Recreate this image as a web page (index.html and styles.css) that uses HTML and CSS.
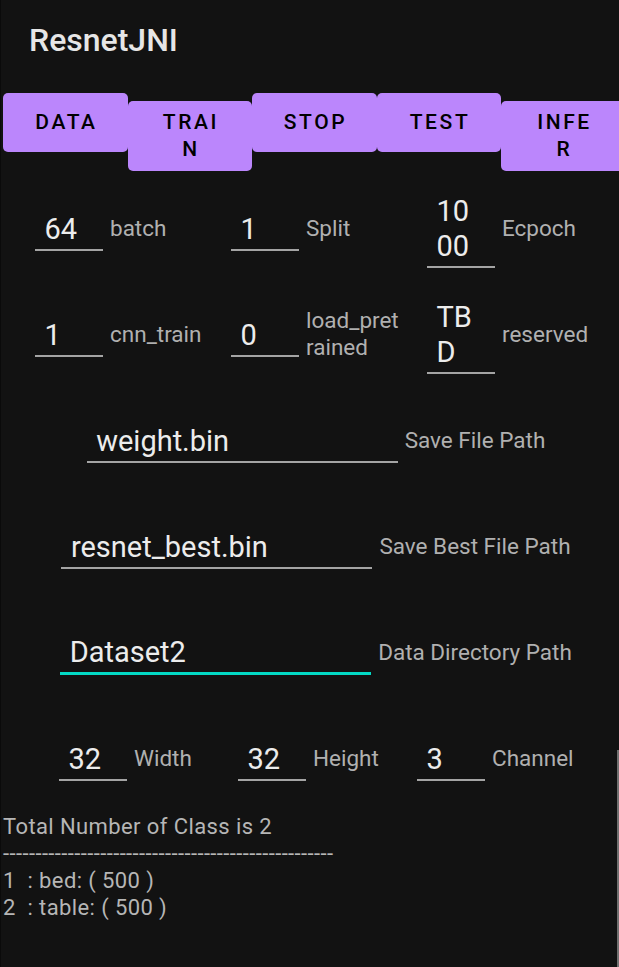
FILE: index.html
```html
<!DOCTYPE html>
<html lang="en">
<head>
<meta charset="utf-8">
<title>ResnetJNI</title>
<link rel="stylesheet" href="styles.css">
</head>
<body>
<div class="screen">
  <header class="appbar"><h1 class="title">ResnetJNI</h1></header>
  <div class="actions">
    <button class="btn">DATA</button>
    <button class="btn">TRAI<br>N</button>
    <button class="btn">STOP</button>
    <button class="btn">TEST</button>
    <button class="btn">INFE<br>R</button>
  </div>
  <main class="form">
    <div class="row grid3">
      <div class="field"><div class="edit small">64</div><span class="label">batch</span></div>
      <div class="field"><div class="edit small">1</div><span class="label">Split</span></div>
      <div class="field"><div class="edit small">10<br>00</div><span class="label">Ecpoch</span></div>
    </div>
    <div class="row grid3">
      <div class="field"><div class="edit small">1</div><span class="label">cnn_train</span></div>
      <div class="field"><div class="edit small">0</div><span class="label two">load_pret<br>rained</span></div>
      <div class="field"><div class="edit small">TB<br>D</div><span class="label">reserved</span></div>
    </div>
    <div class="row wide">
      <div class="edit long">weight.bin</div><span class="label">Save File Path</span>
    </div>
    <div class="row wide">
      <div class="edit long">resnet_best.bin</div><span class="label">Save Best File Path</span>
    </div>
    <div class="row wide">
      <div class="edit long focused">Dataset2</div><span class="label">Data Directory Path</span>
    </div>
    <div class="row grid3b">
      <div class="field"><div class="edit small">32</div><span class="label">Width</span></div>
      <div class="field"><div class="edit small">32</div><span class="label">Height</span></div>
      <div class="field"><div class="edit small">3</div><span class="label">Channel</span></div>
    </div>
  </main>
  <div class="log">
    <div class="log-line">Total Number of Class is 2</div>
    <div class="log-line">---------------------------------------------------</div>
    <div class="log-line">1  : bed: ( 500 )</div>
    <div class="log-line">2  : table: ( 500 )</div>
  </div>
  <div class="scrollbar"></div>
</div>
</body>
</html>
```
FILE: styles.css
```css
html, body {
  margin: 0;
  padding: 0;
  background: #121212;
}
body {
  width: 619px;
  height: 967px;
  overflow: hidden;
  font-family: Roboto, "Noto Sans", "Liberation Sans", sans-serif;
}
.screen {
  position: relative;
  width: 619px;
  height: 967px;
  overflow: hidden;
  border-left: 1px solid #0a0a0a;
  box-sizing: border-box;
}
.appbar {
  height: 93px;
  box-sizing: border-box;
  padding: 21px 0 0 28px;
}
.title {
  margin: 0;
  font-size: 32px;
  line-height: 38px;
  font-weight: 500;
  color: #e6e6e6;
}
.actions {
  display: flex;
  align-items: baseline;
  padding-left: 2px;
  width: 700px;
}
.btn {
  flex: none;
  width: 124.5px;
  min-height: 59px;
  box-sizing: border-box;
  padding: 8px 0 8px 2.5px;
  border: 0;
  border-radius: 5px;
  background: #bb86fc;
  color: #000;
  font-family: Roboto, "Noto Sans", sans-serif;
  font-size: 21px;
  line-height: 27px;
  font-weight: 500;
  letter-spacing: 2.6px;
  text-align: center;
  display: flex;
  align-items: center;
  justify-content: center;
}
.form {
  margin-top: 17px;
  display: flex;
  flex-direction: column;
  gap: 26px;
}
.row {
  height: 80px;
  align-items: center;
}
.grid3 {
  display: grid;
  grid-template-columns: repeat(3, 196px);
  padding-left: 34px;
}
.grid3b {
  display: grid;
  grid-template-columns: repeat(3, 179px);
  padding-left: 58px;
}
.field {
  display: flex;
  align-items: center;
  gap: 7px;
}
.wide {
  display: flex;
  justify-content: center;
  gap: 7px;
  padding-left: 12px;
}
.edit {
  box-sizing: border-box;
  padding: 6px 12px 2px 9.5px;
  font-size: 29px;
  line-height: 35px;
  color: #ececec;
  border-bottom: 2px solid #a4a4a4;
  word-break: break-all;
  flex: none;
}
.edit.small {
  width: 68px;
}
.edit.long {
  width: 311px;
}
.edit.focused {
  border-bottom: 3px solid #03dac5;
}
.label {
  font-size: 22.5px;
  line-height: 27px;
  color: #b0b0b0;
  white-space: nowrap;
}
.log {
  margin-top: 15px;
  padding-left: 2px;
  font-size: 22px;
  line-height: 27px;
  letter-spacing: 0.4px;
  color: #b6b6b6;
}
.log-line {
  white-space: pre;
}
.scrollbar {
  position: absolute;
  right: 0;
  top: 750px;
  bottom: 0;
  width: 2px;
  background: #707070;
}
```
